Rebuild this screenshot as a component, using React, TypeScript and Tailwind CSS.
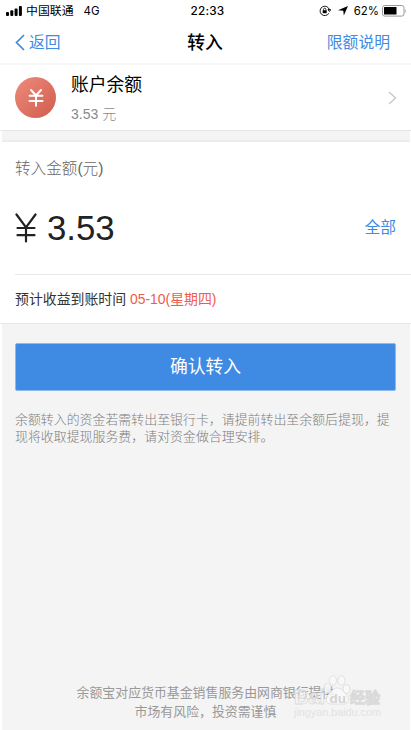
import type { ReactNode } from "react"

const NOTE = [
  "余额转入的资金若需转出至银行卡，请提前转出至余额后提现，提",
  "现将收取提现服务费，请对资金做合理安排。",
]

export default function App() {
  return (
    <div className="flex h-[730px] w-[411px] flex-col overflow-hidden bg-white font-['Liberation_Sans','Noto_Sans_CJK_SC',sans-serif] whitespace-nowrap text-black">
      <StatusBar />
      <NavBar />
      <AccountRow />
      <Gap />
      <AmountPanel />
      <main className="mr-px ml-0.5 flex flex-1 flex-col bg-[#f4f4f4] pr-[14px] pl-[13px]">
        <button className="mt-[19px] h-[48px] rounded-[2px] border border-[#8fb9ec] bg-[#3f8ae2] text-[17.8px] leading-[46px] text-white">
          确认转入
        </button>
        <div className="mt-[20px] text-[12.93px] leading-[17.3px] font-light text-[#7d7d7d]">
          {NOTE.map((line) => (
            <p key={line}>{line}</p>
          ))}
        </div>
        <Footer />
      </main>
    </div>
  )
}

function StatusBar() {
  return (
    <div className="grid h-[22px] grid-cols-3 items-center pr-1 pl-1.5 text-[11.5px] leading-[22px] font-['Inter','Noto_Sans_CJK_SC',sans-serif]">
      <div className="flex items-center">
        <svg width="17" height="10" viewBox="0 0 17 10">
          <rect x="0" y="6" width="3" height="4" rx="1" />
          <rect x="4.3" y="4.3" width="3" height="5.7" rx="1" />
          <rect x="8.6" y="2.4" width="3" height="7.6" rx="1" />
          <rect x="12.9" y="0" width="3" height="10" rx="1" />
        </svg>
        <span className="ml-[3px] text-[11.9px]">中国联通</span>
        <span className="ml-[10px]">4G</span>
      </div>
      <div className="pl-0.5 text-center text-[11.8px] font-medium tracking-[0.2px]">22:33</div>
      <div className="flex items-center justify-end">
        <svg width="12" height="12" viewBox="0 0 12 12" fill="none" stroke="#000">
          <path d="M9.9 8.2A4.7 4.7 0 1 1 10.4 5M9 4.6h2.8L10.4 6.5z" strokeWidth="0.9" />
          <rect x="3.7" y="5.2" width="4" height="3" fill="#000" stroke="none" />
          <path d="M4.5 5.3V4.4a1.2 1.2 0 0 1 2.4 0v.9" strokeWidth="0.8" />
        </svg>
        <svg className="ml-[7px]" width="10" height="10" viewBox="0 0 10 10">
          <path d="M10 0 5.8 9.6 5.3 4.7 0 4.3z" />
        </svg>
        <span className="ml-[6px] text-[11.4px]">62%</span>
        <svg className="ml-[3px]" width="25" height="12" viewBox="0 0 25 12">
          <rect x="0.5" y="0.5" width="21.5" height="10.6" rx="2.2" fill="none" stroke="#999" />
          <rect x="2" y="2" width="12.5" height="7.6" rx="0.5" />
          <path d="M23.3 4v4q1.5-2 0-4" fill="#888" />
        </svg>
      </div>
    </div>
  )
}

function NavBar() {
  return (
    <header className="grid h-[43px] grid-cols-3 items-center border-b-2 border-[#f7f7f7] pr-[21px] pl-[15px] text-[15.8px] leading-[41px] text-[#3f8ae2]">
      <a className="flex items-center">
        <svg width="10" height="17" viewBox="0 0 10 17" fill="none" stroke="currentColor" strokeWidth="1.7">
          <path d="M9 1 1.5 8.5 9 16" />
        </svg>
        <span className="ml-[4px]">返回</span>
      </a>
      <h1 className="pt-px pl-[5px] text-center text-[17.8px] leading-[40px] font-medium text-black">转入</h1>
      <a className="text-right">限额说明</a>
    </header>
  )
}

function AccountRow() {
  return (
    <section className="flex h-[66px] items-center border-b border-[#e6e6e6] pr-[14px] pl-[15px]">
      <div className="flex h-[41px] w-[41px] items-center justify-center rounded-full bg-linear-to-br from-[#ee8b7c] to-[#cf5c4e]">
        <svg width="16" height="18" viewBox="0 0 16 18" fill="none" stroke="#fff" strokeWidth="2" strokeLinecap="round">
          <path d="M3 1 8 6.5 13 1M1.5 6.7h13M1.5 12h13M8 6.7v10" />
        </svg>
      </div>
      <div className="ml-[15px] flex-1 pt-1">
        <p className="text-[17.8px] leading-[30px]">账户余额</p>
        <p className="text-[14px] leading-[29px] font-light text-[#8a8a8a]">3.53 元</p>
      </div>
      <svg width="9" height="14" viewBox="0 0 9 14" fill="none" stroke="#c7c7cc" strokeWidth="1.4">
        <path d="m1 1 6.5 6L1 13" />
      </svg>
    </section>
  )
}

function Gap() {
  return <div className="mr-px ml-0.5 h-[11px] border-b-2 border-[#ececec] bg-[#f4f4f4]" />
}

function AmountPanel() {
  return (
    <section className="h-[182px] border-b border-[#e8e8e8] pl-[15px]">
      <p className="pt-[13px] text-[15.6px] leading-[28px] font-light text-[#666]">转入金额(元)</p>
      <div className="flex h-[91px] items-center justify-between pr-[15px] pb-[2px]">
        <div className="flex items-center text-[34.8px] leading-[48px] text-[#222]">
          <svg width="22" height="30" viewBox="0 0 22 30" fill="none" stroke="currentColor" strokeWidth="2.2" strokeLinecap="round">
            <path d="M1.5 1.5 11 14.5 20.5 1.5M2.5 15h17M2.5 22.2h17M11 15v13.5" />
          </svg>
          <span className="ml-[10px]">3.53</span>
        </div>
        <a className="pt-px text-[15.8px] text-[#3f8ae2]">全部</a>
      </div>
      <p className="border-t border-[#e8e8e8] text-[13.9px] leading-[49px] text-[#333]">
        预计收益到账时间 <Red>05-10(星期四)</Red>
      </p>
    </section>
  )
}

function Red({ children }: { children: ReactNode }) {
  return <span className="text-[#ef5b4c]">{children}</span>
}

function Footer() {
  return (
    <footer className="relative mt-auto pb-[9px] text-center text-[12.9px] leading-[19px] text-[#999]">
      <p>余额宝对应货币基金销售服务由网商银行提供</p>
      <p>市场有风险，投资需谨慎</p>
      <Watermark />
    </footer>
  )
}

function Watermark() {
  return (
    <svg className="absolute -top-[8px] left-[278px]" width="94" height="46" viewBox="0 0 94 46" fill="#f8f8f8" fillOpacity="0.5" stroke="#dadada" strokeWidth="0.8">
      <text x="1" y="28.5" fontSize="20.5" fontWeight="700" textLength="31" lengthAdjust="spacingAndGlyphs" fontFamily="Liberation Sans">Bai</text>
      <g fillOpacity="0.85">
        <ellipse cx="34.5" cy="13" rx="3.4" ry="4.4" />
        <ellipse cx="40" cy="5.5" rx="3.5" ry="4.8" />
        <ellipse cx="48.5" cy="5.5" rx="3.5" ry="4.8" />
        <ellipse cx="53.5" cy="14" rx="3.4" ry="4.4" />
        <path d="M44 13c-4 0-5 3-8 6-5 5-3 10 2 10h13c5 0 6-6 2-10-3-3-4-6-9-6z" />
      </g>
      <text x="36.5" y="27.5" fontSize="13.5" fontWeight="700" fill="#d4d4d4" fillOpacity="1" stroke="none" fontFamily="Liberation Sans">du</text>
      <text x="57" y="27.5" fontSize="15" textLength="30" strokeWidth="1.4" fontFamily="Noto Sans CJK SC">经验</text>
      <text x="1" y="41" fontSize="11" textLength="87" lengthAdjust="spacingAndGlyphs" fill="#e2e2e2" fillOpacity="1" stroke="none" fontFamily="Liberation Sans">jingyan.baidu.com</text>
    </svg>
  )
}
